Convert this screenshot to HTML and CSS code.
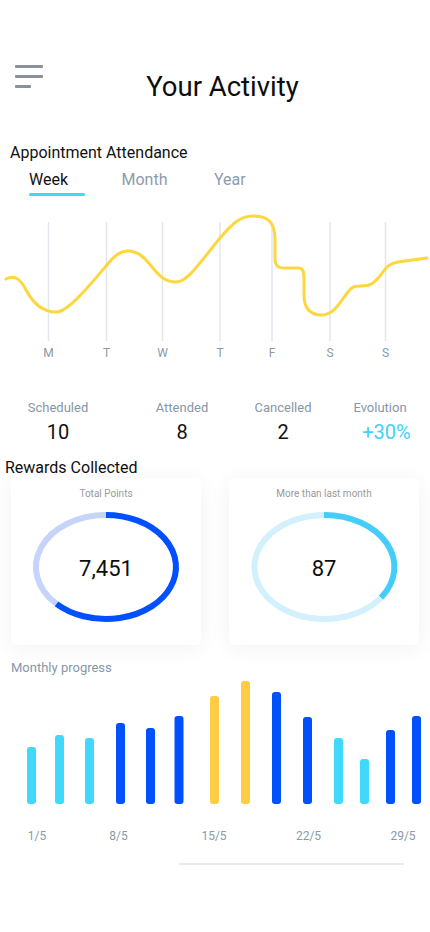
FILE: index.html
```html
<!DOCTYPE html>
<html lang="en">
<head>
<meta charset="utf-8">
<title>Your Activity</title>
<link rel="stylesheet" href="styles.css">
</head>
<body>
<div class="page">
  <header class="header">
    <button class="menu" aria-label="Menu">
      <span class="menu-line"></span>
      <span class="menu-line"></span>
      <span class="menu-line short"></span>
    </button>
    <h1 class="title">Your Activity</h1>
  </header>

  <section class="attendance">
    <h2 class="section-title">Appointment Attendance</h2>
    <nav class="tabs">
      <div class="tab active"><span class="tab-label">Week</span><span class="tab-bar"></span></div>
      <div class="tab"><span class="tab-label">Month</span></div>
      <div class="tab"><span class="tab-label">Year</span></div>
    </nav>
    <svg class="line-chart" width="430" height="165" viewBox="0 200 430 165">
      <g class="grid">
        <line x1="48.5" y1="222" x2="48.5" y2="341"/>
        <line x1="106.5" y1="222" x2="106.5" y2="341"/>
        <line x1="162.5" y1="222" x2="162.5" y2="341"/>
        <line x1="220" y1="222" x2="220" y2="341"/>
        <line x1="272" y1="222" x2="272" y2="341"/>
        <line x1="330" y1="222" x2="330" y2="341"/>
        <line x1="385.5" y1="222" x2="385.5" y2="341"/>
      </g>
      <path class="curve" d="M6,279 C14,275 20,278 26,290 C34,305 44,312 56,312 C68,312 90,285 106,266 C114,256 120,251 128,251 C138,251 144,257 152,267 C160,277 166,282 176,282 C188,282 200,262 220,238 C232,224 240,216 253,216 C268,216 275,222 275,240 L275,258 C275,266 278,268 284,268 L298,268 C304,268 304,272 304,282 L304,295 C304,310 312,315 322,315 C334,315 340,302 348,292 C352,286 355,286 362,286 C370,286 373,284 380,276 C387,266 390,263 398,262 L427,258"/>
      <g class="axis">
        <text x="48.5" y="357">M</text>
        <text x="106.5" y="357">T</text>
        <text x="162.5" y="357">W</text>
        <text x="220" y="357">T</text>
        <text x="272" y="357">F</text>
        <text x="330" y="357">S</text>
        <text x="385.5" y="357">S</text>
      </g>
    </svg>
  </section>

  <section class="stats">
    <div class="stat s1"><span class="stat-label">Scheduled</span><span class="stat-value">10</span></div>
    <div class="stat s2"><span class="stat-label">Attended</span><span class="stat-value">8</span></div>
    <div class="stat s3"><span class="stat-label">Cancelled</span><span class="stat-value">2</span></div>
    <div class="stat s4"><span class="stat-label">Evolution</span><span class="stat-value up">+30%</span></div>
  </section>

  <section class="rewards">
    <h2 class="section-title rewards-title">Rewards Collected</h2>
    <div class="cards">
      <div class="card">
        <div class="card-title">Total Points</div>
        <svg class="ring" width="190" height="135" viewBox="0 0 190 135">
          <path class="ring-track blue-track" d="M45.5,103.8 A70,52 0 0 1 95,15"/>
          <path class="ring-fill blue-fill" d="M95,15 A70,52 0 1 1 45.5,103.8"/>
          <text class="ring-value" x="95" y="76">7,451</text>
        </svg>
      </div>
      <div class="card">
        <div class="card-title">More than last month</div>
        <svg class="ring" width="190" height="135" viewBox="0 0 190 135">
          <path class="ring-track cyan-track" d="M152,97.6 A70,52 0 1 1 95,15"/>
          <path class="ring-fill cyan-fill" d="M95,15 A70,52 0 0 1 152,97.6"/>
          <text class="ring-value" x="95" y="76">87</text>
        </svg>
      </div>
    </div>
  </section>

  <section class="monthly">
    <h3 class="monthly-title">Monthly progress</h3>
    <svg class="bar-chart" width="430" height="175" viewBox="0 675 430 175">
      <rect class="bar light" x="27" y="747" width="9" height="57" rx="3"/>
      <rect class="bar light" x="55" y="735" width="9" height="69" rx="3"/>
      <rect class="bar light" x="85" y="738" width="9" height="66" rx="3"/>
      <rect class="bar dark" x="116" y="723" width="9" height="81" rx="3"/>
      <rect class="bar dark" x="146" y="728" width="9" height="76" rx="3"/>
      <rect class="bar dark" x="174.5" y="716" width="9" height="88" rx="3"/>
      <rect class="bar gold" x="210" y="696" width="9" height="108" rx="3"/>
      <rect class="bar gold" x="241" y="681" width="9" height="123" rx="3"/>
      <rect class="bar dark" x="272" y="692" width="9" height="112" rx="3"/>
      <rect class="bar dark" x="303" y="717" width="9" height="87" rx="3"/>
      <rect class="bar light" x="334" y="738" width="9" height="66" rx="3"/>
      <rect class="bar light" x="360" y="759" width="9" height="45" rx="3"/>
      <rect class="bar dark" x="386" y="730" width="9" height="74" rx="3"/>
      <rect class="bar dark" x="412" y="716" width="9" height="88" rx="3"/>
      <g class="axis">
        <text x="37" y="840">1/5</text>
        <text x="118.5" y="840">8/5</text>
        <text x="214" y="840">15/5</text>
        <text x="308.5" y="840">22/5</text>
        <text x="403" y="840">29/5</text>
      </g>
    </svg>
    <div class="home-line"></div>
  </section>
</div>
</body>
</html>
```

FILE: styles.css
```css
* { box-sizing: border-box; }

html, body {
  margin: 0;
  padding: 0;
  background: #ffffff;
}

body {
  font-family: Roboto, "Liberation Sans", Arial, sans-serif;
  color: #111111;
  width: 430px;
  overflow-x: hidden;
}

.page {
  width: 430px;
}

/* Header */
.header {
  display: grid;
  grid-template-columns: 1fr;
  padding-top: 65px;
}

.menu {
  grid-area: 1 / 1;
  align-self: start;
  justify-self: start;
  margin-left: 15px;
  padding: 0;
  border: 0;
  background: none;
  display: flex;
  flex-direction: column;
  gap: 7px;
  width: 28px;
}

.menu-line {
  display: block;
  width: 28px;
  height: 3px;
  border-radius: 1px;
  background: #8a919b;
}

.menu-line.short {
  width: 16px;
}

.title {
  grid-area: 1 / 1;
  margin: 0;
  padding: 7px 0 0 15px;
  text-align: center;
  font-size: 27.5px;
  line-height: 30px;
  font-weight: 400;
  color: #0d0d0d;
}

/* Attendance */
.section-title {
  margin: 0;
  font-size: 16px;
  line-height: 19px;
  font-weight: 400;
  color: #111111;
}

.attendance .section-title {
  margin-top: 41px;
  padding-left: 10px;
}

.tabs {
  display: flex;
  padding-left: 29px;
  margin-top: 8px;
}

.tab {
  width: 92.5px;
  display: flex;
  flex-direction: column;
  align-items: flex-start;
}

.tab-label {
  font-size: 16px;
  line-height: 19px;
  color: #8d9caa;
}

.tab.active .tab-label {
  color: #111111;
}

.tab-bar {
  display: block;
  width: 56px;
  height: 3px;
  margin-top: 4px;
  border-radius: 2px;
  background: #3fd7f6;
}

.line-chart {
  display: block;
  margin-top: 4px;
}

.grid line {
  stroke: #e2e7ec;
  stroke-width: 1.5;
}

.curve {
  fill: none;
  stroke: #fdd73d;
  stroke-width: 3;
  stroke-linecap: round;
  stroke-linejoin: round;
}

.axis text {
  font-family: Roboto, "Liberation Sans", Arial, sans-serif;
  font-size: 12px;
  fill: #8a9aa8;
  text-anchor: middle;
}

/* Stats */
.stats {
  display: grid;
  grid-template-columns: 116px 132px 70px 112px;
  margin-top: 35px;
}

.stat {
  display: flex;
  flex-direction: column;
  align-items: center;
}

.stat.s4 {
  padding-left: 12px;
}

.stat-label {
  font-size: 13px;
  line-height: 15px;
  color: #8797a6;
  white-space: nowrap;
}

.stat-value {
  margin-top: 5px;
  font-size: 20px;
  line-height: 24px;
  color: #111111;
}

.stat-value.up {
  color: #3fd3f7;
  padding-left: 13px;
}

/* Rewards */
.rewards-title {
  margin-top: 14px;
  padding-left: 5px;
}

.cards {
  display: grid;
  grid-template-columns: 190px 190px;
  gap: 28px;
  padding-left: 11px;
  margin-top: 1px;
}

.card {
  height: 167px;
  background: #ffffff;
  border-radius: 5px;
  box-shadow: 0 3px 22px rgba(0, 0, 0, 0.055);
  padding-top: 10px;
  display: flex;
  flex-direction: column;
  align-items: center;
}

.card-title {
  font-size: 10px;
  line-height: 12px;
  color: #9a9a9a;
}

.ring {
  display: block;
}

.ring-track,
.ring-fill {
  fill: none;
  stroke-width: 6;
  stroke-linecap: butt;
}

.blue-track { stroke: #c6d4fb; }
.blue-fill { stroke: #0050ff; }
.cyan-track { stroke: #d3f1fc; }
.cyan-fill { stroke: #45cdfa; }

.ring-value {
  font-family: Roboto, "Liberation Sans", Arial, sans-serif;
  font-size: 22px;
  fill: #0d0d0d;
  text-anchor: middle;
}

/* Monthly */
.monthly-title {
  margin: 15px 0 0;
  padding-left: 11px;
  font-size: 13px;
  line-height: 15px;
  font-weight: 400;
  color: #8797a6;
}

.bar-chart {
  display: block;
}

.bar.light { fill: #40d9fc; }
.bar.dark { fill: #0050fc; }
.bar.gold { fill: #ffcc44; }

.home-line {
  margin: 13px 0 0 179px;
  width: 225px;
  height: 2px;
  background: #e6eaef;
}
```
